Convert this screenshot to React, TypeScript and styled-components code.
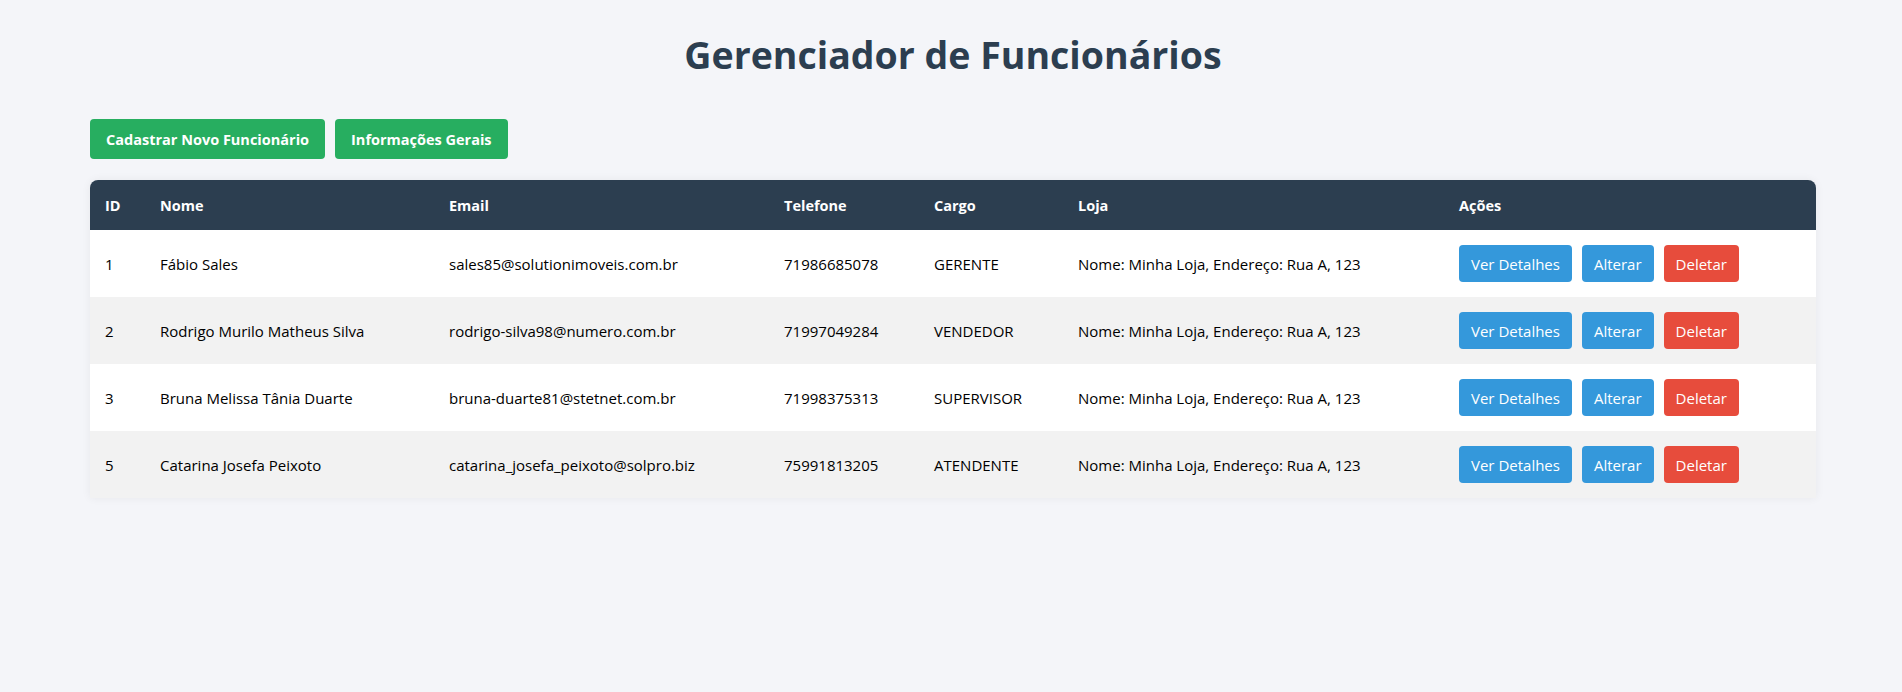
import { createGlobalStyle } from 'styled-components';
import styled from 'styled-components';

type Funcionario = {
  id: number;
  nome: string;
  email: string;
  telefone: string;
  cargo: string;
  loja: string;
};

const FUNCIONARIOS: Funcionario[] = [
  {
    id: 1,
    nome: 'Fábio Sales',
    email: 'sales85@solutionimoveis.com.br',
    telefone: '71986685078',
    cargo: 'GERENTE',
    loja: 'Nome: Minha Loja, Endereço: Rua A, 123',
  },
  {
    id: 2,
    nome: 'Rodrigo Murilo Matheus Silva',
    email: 'rodrigo-silva98@numero.com.br',
    telefone: '71997049284',
    cargo: 'VENDEDOR',
    loja: 'Nome: Minha Loja, Endereço: Rua A, 123',
  },
  {
    id: 3,
    nome: 'Bruna Melissa Tânia Duarte',
    email: 'bruna-duarte81@stetnet.com.br',
    telefone: '71998375313',
    cargo: 'SUPERVISOR',
    loja: 'Nome: Minha Loja, Endereço: Rua A, 123',
  },
  {
    id: 5,
    nome: 'Catarina Josefa Peixoto',
    email: 'catarina_josefa_peixoto@solpro.biz',
    telefone: '75991813205',
    cargo: 'ATENDENTE',
    loja: 'Nome: Minha Loja, Endereço: Rua A, 123',
  },
];

const COLUMNS = [
  { label: 'ID', width: 55 },
  { label: 'Nome', width: 289 },
  { label: 'Email', width: 335 },
  { label: 'Telefone', width: 150 },
  { label: 'Cargo', width: 144 },
  { label: 'Loja', width: 381 },
  { label: 'Ações', width: 372 },
];

const GlobalStyle = createGlobalStyle`
  body {
    margin: 0;
    background: #f4f5f9;
    font-family: 'Segoe UI', 'Open Sans', sans-serif;
    font-size: 15px;
    color: #000;
  }
`;

const Page = styled.div`
  padding: 28px 86px 40px 90px;
`;

const Title = styled.h1`
  margin: 0;
  text-align: center;
  font-size: 37.5px;
  line-height: 54px;
  font-weight: 700;
  color: #2c3e50;
`;

const Toolbar = styled.div`
  display: flex;
  gap: 10px;
  margin-top: 37px;
`;

const Button = styled.button<{ $variant: 'green' | 'blue' | 'red'; $bold?: boolean }>`
  font-family: inherit;
  font-size: ${(p) => (p.$bold ? '14.5px' : '15px')};
  font-weight: ${(p) => (p.$bold ? 700 : 400)};
  color: #fff;
  border: none;
  border-radius: 4px;
  cursor: pointer;
  height: ${(p) => (p.$bold ? '40px' : '37px')};
  padding: 0 ${(p) => (p.$bold ? '16px' : '12px')};
  background: ${(p) =>
    p.$variant === 'green' ? '#27ae60' : p.$variant === 'blue' ? '#3498db' : '#e74c3c'};
`;

const Table = styled.table`
  margin-top: 21px;
  width: 100%;
  border-collapse: collapse;
  table-layout: fixed;
  box-shadow: 0 0 10px rgba(0, 0, 0, 0.06);
  border-radius: 8px 8px 0 0;
`;

const HeadCell = styled.th`
  background: #2c3e50;
  color: #fff;
  font-size: 14.5px;
  font-weight: 700;
  text-align: left;
  height: 50px;
  padding: 0 15px;

  &:first-child {
    border-top-left-radius: 8px;
  }
  &:last-child {
    border-top-right-radius: 8px;
  }
`;

const Row = styled.tr`
  background: #fff;
  &:nth-child(even) {
    background: #f2f2f2;
  }
`;

const Cell = styled.td`
  height: 67px;
  padding: 0 15px;
  font-size: 15px;
  white-space: nowrap;
  box-sizing: border-box;
`;

const Actions = styled.div`
  display: flex;
  gap: 10px;
`;

export default function App() {
  return (
    <>
      <GlobalStyle />
      <Page>
        <Title>Gerenciador de Funcionários</Title>
        <Toolbar>
          <Button $variant="green" $bold>
            Cadastrar Novo Funcionário
          </Button>
          <Button $variant="green" $bold>
            Informações Gerais
          </Button>
        </Toolbar>
        <Table>
          <colgroup>
            {COLUMNS.map((c) => (
              <col key={c.label} style={{ width: c.width }} />
            ))}
          </colgroup>
          <thead>
            <tr>
              {COLUMNS.map((c) => (
                <HeadCell key={c.label}>{c.label}</HeadCell>
              ))}
            </tr>
          </thead>
          <tbody>
            {FUNCIONARIOS.map((f) => (
              <Row key={f.id}>
                <Cell>{f.id}</Cell>
                <Cell>{f.nome}</Cell>
                <Cell>{f.email}</Cell>
                <Cell>{f.telefone}</Cell>
                <Cell>{f.cargo}</Cell>
                <Cell>{f.loja}</Cell>
                <Cell>
                  <Actions>
                    <Button $variant="blue">Ver Detalhes</Button>
                    <Button $variant="blue">Alterar</Button>
                    <Button $variant="red">Deletar</Button>
                  </Actions>
                </Cell>
              </Row>
            ))}
          </tbody>
        </Table>
      </Page>
    </>
  );
}
